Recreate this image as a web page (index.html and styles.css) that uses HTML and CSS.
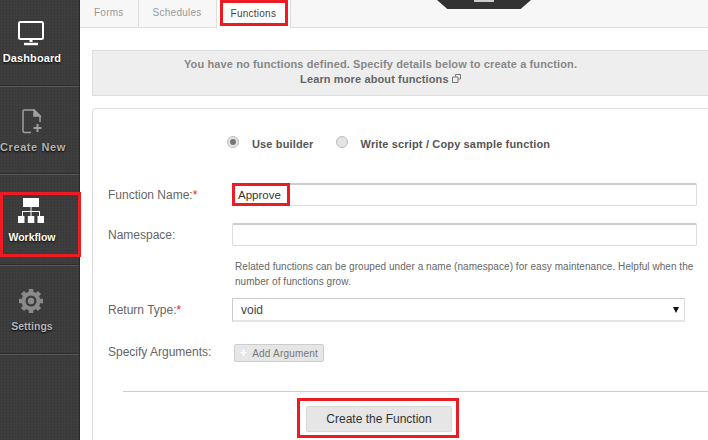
FILE: index.html
```html
<!DOCTYPE html>
<html lang="en">
<head>
    <meta charset="UTF-8">
    <title>Functions</title>
    <link rel="stylesheet" href="styles.css">
</head>
<body>
    <nav class="sidebar">
        <div class="nav-item active">
            <svg class="nav-icon" width="28" height="26" viewBox="0 0 28 26" fill="none" stroke="#fff">
                <rect x="2" y="2" width="24" height="17" rx="1.5" stroke-width="2"/>
                <path d="M14 19v3" stroke-width="3"/>
                <path d="M7 24h14" stroke-width="2.4"/>
            </svg>
            <div class="nav-label">Dashboard</div>
        </div>
        <div class="nav-item">
            <svg class="nav-icon" width="28" height="26" viewBox="0 0 28 26" fill="none" stroke="#a0a0a0" stroke-width="1.5">
                <path d="M14 23.500H7.500Q6 23.500 6 22V2.500Q6 1 7.500 1H17l6 6v6"/>
                <path d="M17 1v6h6z" fill="#a0a0a0"/>
                <path d="M20.500 15v8M16.500 19h8" stroke-width="2"/>
            </svg>
            <div class="nav-label wide">Create New</div>
        </div>
        <div class="nav-item selected">
            <svg class="nav-icon" width="28" height="26" viewBox="0 0 28 26" fill="#fff" stroke="none">
                <rect x="6" y="0" width="16" height="9"/>
                <path d="M13.500 9h1v4h8.500v5h-1v-4h-7.500v4h-1v-4h-7.500v4h-1v-5h8.500z"/>
                <rect x="1" y="18" width="6.500" height="7"/>
                <rect x="10.800" y="18" width="6.500" height="7"/>
                <rect x="20.500" y="18" width="6.500" height="7"/>
            </svg>
            <div class="nav-label small">Workflow</div>
        </div>
        <div class="nav-item">
            <svg class="nav-icon" width="28" height="26" viewBox="0 0 28 26" fill="none" stroke="#8a8a8a">
                <circle cx="14" cy="13" r="7.500" stroke-width="4"/>
                <circle cx="14" cy="13" r="3.200" fill="#8a8a8a" stroke="none"/>
                <path d="M14 1v5M14 20v5M2 13h5M21 13h5M5.500 4.500l3.500 3.500M19 18l3.500 3.500M22.500 4.500L19 8M9 18l-3.500 3.500" stroke-width="4.500"/>
            </svg>
            <div class="nav-label small">Settings</div>
        </div>
    </nav>

    <div class="main">
        <div class="tabs">
            <div class="tab">Forms</div>
            <div class="tab">Schedules</div>
            <div class="tab current"><span class="mark">Functions</span></div>
            <div class="handle"><span></span></div>
        </div>

        <div class="content">
            <div class="notice">
                <div>You have no functions defined. Specify details below to create a function.</div>
                <div class="notice-link">Learn more about functions
                    <svg width="9" height="9" viewBox="0 0 9 9" fill="none" stroke="#777"><path d="M3.500 2.500V.5h5v4.500h-2M.5 3h5.500v5.500H.5z"/></svg>
                </div>
            </div>

            <div class="card">
                <div class="mode-row">
                    <span class="radio checked"></span>
                    <span class="mode-label first">Use builder</span>
                    <span class="radio"></span>
                    <span class="mode-label">Write script / Copy sample function</span>
                </div>

                <div class="row name-row">
                    <label>Function Name:<em>*</em></label>
                    <div class="input filled"><span class="mark">Approve</span></div>
                </div>
                <div class="row namespace-row">
                    <label>Namespace:</label>
                    <div class="input"></div>
                </div>
                <p class="help">Related functions can be grouped under a name (namespace) for easy maintenance. Helpful when the number of functions grow.</p>
                <div class="row type-row">
                    <label>Return Type:<em>*</em></label>
                    <div class="select">void<span class="arrow"></span></div>
                </div>
                <div class="row args-row">
                    <label>Specify Arguments:</label>
                    <div class="add-btn"><b>+</b>Add Argument</div>
                </div>
                <div class="actions">
                    <div class="mark-box"><div class="create-btn">Create the Function</div></div>
                </div>
            </div>
        </div>
    </div>
</body>
</html>
```

FILE: styles.css
```css
html, body {
    height: 100%;
}

body {
    margin: 0;
    display: flex;
    height: 440px;
    overflow: hidden;
    background-color: #fff;
    font-family: "Liberation Sans", Arial, sans-serif;
    color: #555;
}

.sidebar {
    width: 80px;
    flex-shrink: 0;
    box-sizing: border-box;
    background-color: #3e3e3e;
    background-image:
        repeating-linear-gradient(0deg, rgba(0,0,0,0.05) 0 1px, transparent 1px 3px),
        repeating-linear-gradient(90deg, rgba(0,0,0,0.05) 0 1px, transparent 1px 3px);
    border-right: 1px solid #2a2a2a;
}

.nav-item {
    height: 87px;
    padding-top: 20px;
    box-sizing: border-box;
    border-bottom: 1px solid #2e2e2e;
    box-shadow: 0 1px 0 #585858;
    margin-bottom: 1px;
    position: relative;
    color: #b5b5b5;
}

.nav-item:nth-child(1) {
    height: 86px;
}

.nav-item:nth-child(2) {
    padding-top: 22px;
}

.nav-item:nth-child(3) {
    height: 90px;
    padding-top: 23px;
}

.nav-item:nth-child(4) {
    height: 88px;
    padding-top: 22px;
}

.nav-icon {
    display: block;
    margin-left: 17px;
}

.nav-label {
    width: 64px;
    margin-top: 5px;
    text-align: center;
    font-size: 11px;
    line-height: 14px;
    font-weight: bold;
    white-space: nowrap;
    letter-spacing: 0.1px;
    text-shadow: 0 1px 2px #000;
}

.nav-label.wide {
    letter-spacing: 0.6px;
}

.nav-label.small {
    font-size: 10.500px;
    letter-spacing: 0;
}

.selected .nav-label {
    margin-top: 6px;
}

.active .nav-label,
.selected .nav-label {
    color: #fff;
}

.selected::after {
    content: "";
    position: absolute;
    left: 0;
    top: 17px;
    width: 81px;
    height: 65px;
    box-sizing: border-box;
    border: 3px solid #ed1c24;
}

.main {
    flex: 1;
    min-width: 0;
}

.tabs {
    height: 27px;
    display: flex;
    position: relative;
    background-color: #f7f7f7;
    border-bottom: 1px solid #ddd;
    font-size: 10px;
    letter-spacing: 0.25px;
}

.tab {
    padding: 0 14px 0 14px;
    line-height: 26px;
    color: #999;
    border-right: 1px solid #ddd;
}

.tab.current {
    padding: 0 2px 0 3px;
    background-color: #fff;
    height: 28px;
    color: #444;
}

.tab .mark {
    display: block;
    width: 68px;
    height: 26px;
    padding-left: 8px;
    line-height: 21px;
    border: 3px solid #ed1c24;
    box-sizing: border-box;
}

.handle {
    position: absolute;
    left: 357px;
    top: 0;
    width: 94px;
    height: 9px;
    background: #333;
    clip-path: polygon(0 0, 100% 0, 89% 100%, 11% 100%);
    display: flex;
    justify-content: center;
}

.handle span {
    display: block;
    width: 20px;
    height: 2px;
    background-color: #ccc;
}

.content {
    padding: 22px 0 0 12px;
}

.notice {
    height: 46px;
    box-sizing: border-box;
    padding: 6px 40px 0 0;
    background-color: #eee;
    border-top: 1px solid #ddd;
    border-bottom: 1px solid #ddd;
    border-left: 1px solid #ddd;
    text-align: center;
    font-size: 11px;
    line-height: 15px;
    font-weight: bold;
    color: #888;
    letter-spacing: 0.12px;
}

.notice-link {
    color: #666;
}

.card {
    margin-top: 12px;
    height: 340px;
    box-sizing: border-box;
    padding-left: 15px;
    border-top: 1px solid #ddd;
    border-left: 1px solid #ddd;
    border-top-left-radius: 4px;
}

.mode-row {
    display: flex;
    align-items: center;
    padding: 26px 0 0 119px;
    height: 18px;
    font-size: 11px;
    font-weight: bold;
    color: #555;
    letter-spacing: 0.15px;
}

.radio {
    width: 10px;
    height: 10px;
    border-radius: 50%;
    border: 1px solid #bbb;
    background-color: #e4e4e4;
    margin-top: -4px;
    position: relative;
}

.radio.checked::after {
    content: "";
    position: absolute;
    left: 2px;
    top: 2px;
    width: 6px;
    height: 6px;
    border-radius: 50%;
    background-color: #777;
}

.mode-label {
    margin-left: 13px;
}

.mode-label.first {
    margin-right: 22px;
}

.row {
    display: flex;
    font-size: 12px;
}

.row label {
    width: 124px;
    flex-shrink: 0;
    color: #666;
}

.row label em {
    color: #ed1c24;
    font-style: normal;
}

.input {
    width: 465px;
    height: 23px;
    box-sizing: border-box;
    background-color: #fff;
    border: 1px solid #ddd;
    border-top: 2px solid #ccc;
    border-radius: 2px;
}

.input .mark {
    display: block;
    width: 58px;
    height: 23px;
    margin: -2px 0 0 -1px;
    padding-left: 3px;
    box-sizing: border-box;
    font-size: 11.500px;
    line-height: 19px;
    border: 3px solid #ed1c24;
    color: #333;
}

.name-row {
    margin-top: 30px;
    line-height: 23px;
}

.namespace-row {
    margin-top: 17px;
    line-height: 23px;
}

.name-row label,
.namespace-row label {
    height: 23px;
    box-sizing: border-box;
    padding-top: 1px;
}

.help {
    margin: 13px 0 0 127px;
    width: 475px;
    font-size: 10px;
    line-height: 15px;
    color: #666;
    letter-spacing: 0.05px;
}

.type-row {
    margin-top: 9px;
    line-height: 24px;
}

.select {
    position: relative;
    width: 453px;
    height: 24px;
    box-sizing: border-box;
    padding-left: 8px;
    line-height: 22px;
    border: 1px solid #ccc;
    border-right-color: #ddd;
    border-bottom: 2px solid #e4e4e4;
    color: #444;
}

.arrow {
    position: absolute;
    right: 5px;
    top: 8px;
    border-left: 3.500px solid transparent;
    border-right: 3.500px solid transparent;
    border-top: 6px solid #111;
}

.args-row {
    margin-top: 22px;
    line-height: 14px;
}

.args-row label {
    padding-top: 1px;
}

.add-btn {
    margin-left: 2px;
    width: 90px;
    height: 18px;
    box-sizing: border-box;
    border: 1px solid #ccc;
    border-radius: 2px;
    background-color: #e6e6e6;
    font-size: 10px;
    line-height: 16px;
    color: #777;
    text-align: center;
    letter-spacing: 0.2px;
    white-space: nowrap;
}

.add-btn b {
    color: #fff;
    font-size: 12px;
    margin-right: 5px;
}

.actions {
    margin: 29px 0 0 15px;
    border-top: 1px solid #ccc;
    padding: 6px 0 0 174px;
}

.mark-box {
    width: 162px;
    height: 40px;
    box-sizing: border-box;
    border: 3px solid #ed1c24;
    padding: 5px 6px;
}

.create-btn {
    width: 146px;
    height: 26px;
    box-sizing: border-box;
    border: 1px solid #d8d8d8;
    border-radius: 2px;
    background-color: #e6e6e6;
    font-size: 12px;
    line-height: 24px;
    text-align: center;
    color: #333;
}
```
